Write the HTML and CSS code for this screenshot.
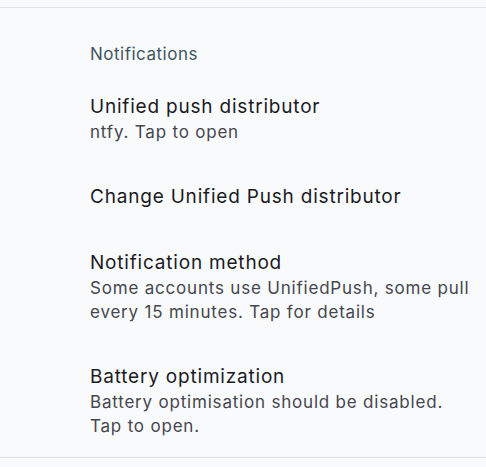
FILE: index.html
```html
<!DOCTYPE html>
<html lang="en">
<head>
<meta charset="utf-8">
<title>Notifications</title>
<link rel="stylesheet" href="styles.css">
</head>
<body>
<main class="screen">
  <section class="group">
    <h2 class="group-title">Notifications</h2>
    <div class="pref">
      <div class="pref-title">Unified push distributor</div>
      <div class="pref-summary">ntfy. Tap to open</div>
    </div>
    <div class="pref">
      <div class="pref-title">Change Unified Push distributor</div>
    </div>
    <div class="pref">
      <div class="pref-title">Notification method</div>
      <div class="pref-summary">Some accounts use UnifiedPush, some pull every 15 minutes. Tap for details</div>
    </div>
    <div class="pref">
      <div class="pref-title">Battery optimization</div>
      <div class="pref-summary">Battery optimisation should be disabled. Tap to open.</div>
    </div>
  </section>
</main>
</body>
</html>
```
FILE: styles.css
```css
html, body {
  margin: 0;
  padding: 0;
  background: #f9fafc;
}
body {
  font-family: "Inter", "Noto Sans", sans-serif;
  color: #1b1b1f;
}
.screen {
  padding-top: 7px;
  height: 467px;
  box-sizing: border-box;
}
.group {
  border-top: 1px solid #dfe0e3;
  border-bottom: 1px solid #dfe0e3;
}
.group-title {
  margin: 0;
  padding: 35px 20px 8px 90px;
  font-size: 17px;
  line-height: 22px;
  font-weight: 400;
  letter-spacing: 0.5px;
  color: #40555f;
}
.pref {
  padding: 21px 16px 19px 90px;
}
.pref-title {
  font-size: 19px;
  line-height: 26px;
  letter-spacing: 0.8px;
  color: #1b1b1f;
}
.pref-summary {
  font-size: 17px;
  line-height: 24px;
  letter-spacing: 0.8px;
  color: #45464e;
}
```
